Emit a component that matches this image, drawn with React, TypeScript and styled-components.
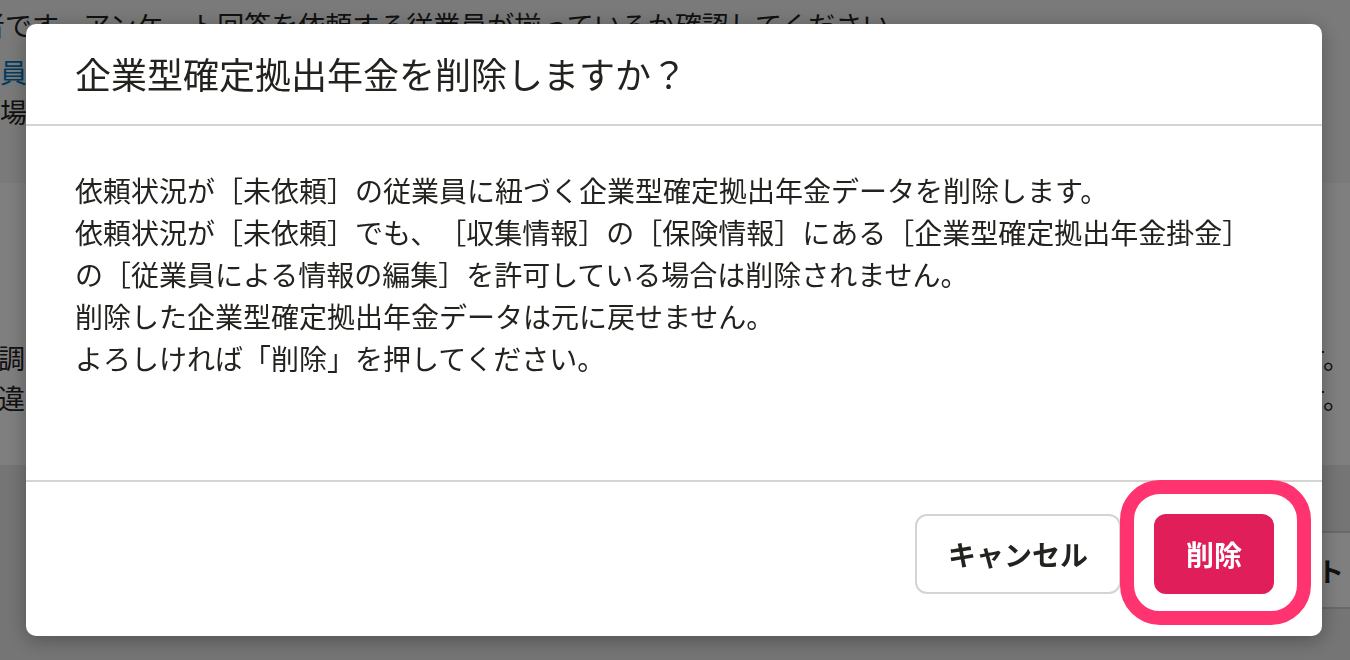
import React from 'react';
import styled, { createGlobalStyle } from 'styled-components';

const BODY_LINES = [
  '依頼状況が［未依頼］の従業員に紐づく企業型確定拠出年金データを削除します。',
  '依頼状況が［未依頼］でも、［収集情報］の［保険情報］にある［企業型確定拠出年金掛金］',
  'の［従業員による情報の編集］を許可している場合は削除されません。',
  '削除した企業型確定拠出年金データは元に戻せません。',
  'よろしければ「削除」を押してください。',
];

export default function App() {
  return (
    <>
      <GlobalStyle />
      <Page>
        <Notice>
          <PageLine $gap={7}>者です。アンケート回答を依頼する従業員が揃っているか確認してください。</PageLine>
          <LinkLine>業員一覧を確認する</LinkLine>
          <PageLine $indent={-5}>る場合は、従業員を追加してから依頼してください。</PageLine>
        </Notice>

        <Card>
          <SplitLine>
            <span>調整が必要な場合は、各従業員の情報を確認してください。</span>
            <span>す。</span>
          </SplitLine>
          <SplitLine>
            <span>違う内容が登録されている場合は、修正してから依頼しま</span>
            <span>す。</span>
          </SplitLine>
        </Card>

        <Toolbar>
          <GhostButton>エクスポート</GhostButton>
        </Toolbar>
      </Page>

      <Overlay>
        <Dialog role="dialog" aria-modal="true">
          <DialogHeader>
            <DialogTitle>企業型確定拠出年金を削除しますか？</DialogTitle>
          </DialogHeader>

          <DialogBody>
            {BODY_LINES.map((line) => (
              <BodyLine key={line}>{line}</BodyLine>
            ))}
          </DialogBody>

          <DialogFooter>
            <Button type="button">キャンセル</Button>
            <Highlight>
              <Button type="button" $danger>
                削除
              </Button>
            </Highlight>
          </DialogFooter>
        </Dialog>
      </Overlay>
    </>
  );
}

const GlobalStyle = createGlobalStyle`
  html, body {
    margin: 0;
    width: 1350px;
    height: 660px;
    overflow: hidden;
  }

  body {
    font-family: "Noto Sans CJK JP", "Noto Sans", sans-serif;
    color: #23221e;
    background: #eaeaea;
    text-spacing-trim: space-all;
  }
`;

const Page = styled.div`
  width: 1400px;
  margin-left: -22px;
  display: flex;
  flex-direction: column;
`;

const Notice = styled.section`
  height: 183px;
  box-sizing: border-box;
  padding-top: 5px;
  background: #f6f5f4;
`;

const PageLine = styled.p<{ $gap?: number; $indent?: number }>`
  margin: 0 0 ${({ $gap }) => $gap ?? 0}px;
  font-size: 27px;
  line-height: 40px;
  white-space: nowrap;
  text-indent: ${({ $indent }) => $indent ?? 0}px;
`;

const LinkLine = styled(PageLine)`
  color: #0077c7;
  text-indent: -5px;
`;

const Card = styled.section`
  background: #fff;
  padding: 155px 0 47px;
`;

const SplitLine = styled.p`
  margin: 0;
  width: 1372px;
  box-sizing: border-box;
  padding-left: 20px;
  display: flex;
  justify-content: space-between;
  font-size: 27px;
  line-height: 40px;
  white-space: nowrap;
`;

const Toolbar = styled.div`
  display: flex;
  justify-content: flex-end;
  margin-top: 66px;
`;

const GhostButton = styled.button`
  height: 78px;
  padding: 0 32px;
  background: #fff;
  border: 2px solid #d6d3d0;
  border-radius: 12px;
  font-family: inherit;
  font-size: 27px;
  font-weight: 700;
  color: #23221e;
`;

const Overlay = styled.div`
  position: fixed;
  inset: 0;
  background: rgba(0, 0, 0, 0.5);
  display: flex;
  align-items: flex-start;
  padding: 24px 0 0 26px;
`;

const Dialog = styled.div`
  width: 1296px;
  background: #fff;
  border-radius: 10px;
  box-shadow: 0 4px 20px rgba(0, 0, 0, 0.3);
`;

const DialogHeader = styled.header`
  padding: 23px 49px 25px;
  border-bottom: 2px solid #d6d3d0;
`;

const DialogTitle = styled.h2`
  margin: 0;
  font-size: 36px;
  font-weight: 400;
  line-height: 52px;
`;

const DialogBody = styled.div`
  padding: 43px 49px 101px;
  border-bottom: 2px solid #d6d3d0;
`;

const BodyLine = styled.p`
  margin: 0;
  font-size: 28px;
  line-height: 42px;
  white-space: nowrap;
`;

const DialogFooter = styled.footer`
  display: flex;
  justify-content: flex-end;
  align-items: center;
  gap: 33px;
  padding: 32px 48px 42px;
`;

const Button = styled.button<{ $danger?: boolean }>`
  height: 80px;
  padding: 0 ${({ $danger }) => ($danger ? 30 : 31)}px;
  border-radius: 12px;
  border: 2px solid ${({ $danger }) => ($danger ? '#e01e5a' : '#d6d3d0')};
  background: ${({ $danger }) => ($danger ? '#e01e5a' : '#fff')};
  color: ${({ $danger }) => ($danger ? '#fff' : '#23221e')};
  font-family: inherit;
  font-size: 28px;
  font-weight: 700;
  cursor: pointer;
`;

const Highlight = styled.div`
  position: relative;
  display: flex;

  &::after {
    content: '';
    position: absolute;
    top: -34px;
    left: -34px;
    right: -37px;
    bottom: -31px;
    border: 14px solid #ff3370;
    border-radius: 40px;
    pointer-events: none;
  }
`;
